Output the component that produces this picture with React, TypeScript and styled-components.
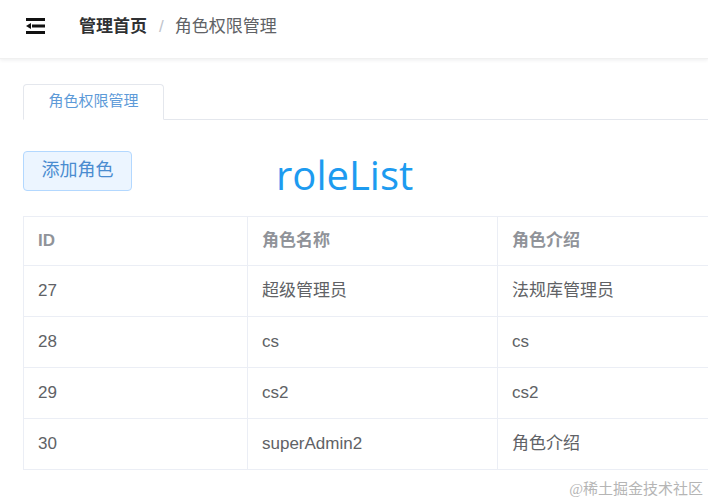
import styled, { createGlobalStyle } from 'styled-components';

const GlobalStyle = createGlobalStyle`
  html, body {
    margin: 0;
    padding: 0;
    background: #fff;
    font-family: "Liberation Sans", "Noto Sans CJK SC", sans-serif;
    overflow: hidden;
  }
`;

const Page = styled.div`
  width: 708px;
  height: 504px;
  position: relative;
  overflow: hidden;
`;

const Header = styled.header`
  height: 59px;
  display: flex;
  align-items: center;
  padding-left: 26px;
  padding-bottom: 5px;
  box-sizing: border-box;
  box-shadow: 0 1px 4px rgba(0, 21, 41, 0.08);
  border-bottom: 1px solid #f0f0f0;
`;

const FoldButton = styled.div`
  width: 19px;
  height: 16px;
  margin-right: 34px;
  margin-bottom: 2px;
  display: flex;
`;

const Breadcrumb = styled.nav`
  display: flex;
  align-items: center;
  font-size: 17px;
  line-height: 20px;
`;

const CrumbStrong = styled.span`
  font-weight: 700;
  color: #303133;
`;

const Separator = styled.span`
  color: #c0c4cc;
  margin: 0 11px 0 12px;
  font-weight: 400;
`;

const CrumbText = styled.span`
  color: #606266;
`;

const Main = styled.main`
  padding: 25px 0 0 23px;
`;

const TabBar = styled.div`
  display: flex;
  border-bottom: 1px solid #e4e7ed;
  height: 35px;
`;

const Tab = styled.div`
  width: 141px;
  height: 36px;
  box-sizing: border-box;
  border: 1px solid #e4e7ed;
  border-bottom-color: #fff;
  border-radius: 4px 4px 0 0;
  display: flex;
  align-items: center;
  justify-content: center;
  padding-bottom: 3px;
  font-size: 15px;
  line-height: 18px;
  color: #5d9ad8;
`;

const Toolbar = styled.div`
  display: flex;
  align-items: center;
  margin-top: 31px;
  height: 40px;
`;

const AddButton = styled.button`
  width: 109px;
  height: 40px;
  box-sizing: border-box;
  background: #ecf5ff;
  border: 1px solid #b3d8ff;
  border-radius: 4px;
  color: #4a8cd0;
  font-size: 18px;
  line-height: 20px;
  font-family: inherit;
  padding: 0 0 3px;
  cursor: pointer;
`;

const Title = styled.h1`
  margin: 7px 0 0 144px;
  font-family: "Open Sans", sans-serif;
  font-weight: 400;
  font-size: 40px;
  line-height: 40px;
  color: #1d9bf0;
`;

const Table = styled.div`
  margin-top: 25px;
  border-top: 1px solid #ebeef5;
  border-left: 1px solid #ebeef5;
  width: 720px;
`;

const Row = styled.div<{ $head?: boolean }>`
  display: grid;
  grid-template-columns: 224px 250px 1fr;
  height: ${(p) => (p.$head ? '49px' : '51px')};
  border-bottom: 1px solid #ebeef5;
  box-sizing: border-box;
`;

const Cell = styled.div<{ $head?: boolean }>`
  display: flex;
  align-items: center;
  padding-left: 14px;
  border-right: 1px solid #ebeef5;
  font-size: 17px;
  line-height: 20px;
  color: ${(p) => (p.$head ? '#909399' : '#606266')};
  font-weight: ${(p) => (p.$head ? 700 : 400)};
`;

const Watermark = styled.div`
  position: absolute;
  right: 5px;
  bottom: 6px;
  font-size: 15px;
  line-height: 18px;
  color: #b5b5b5;
  font-family: "Liberation Serif", "Noto Sans CJK SC", serif;
`;

const roles = [
  { id: 27, name: '超级管理员', desc: '法规库管理员' },
  { id: 28, name: 'cs', desc: 'cs' },
  { id: 29, name: 'cs2', desc: 'cs2' },
  { id: 30, name: 'superAdmin2', desc: '角色介绍' },
];

const FoldIcon = () => (
  <svg width="19" height="16" viewBox="0 0 19 16">
    <rect x="0" y="0" width="19" height="3" fill="#111" />
    <rect x="6" y="6.5" width="13" height="3" fill="#111" />
    <polygon points="0,8 5,5 5,11" fill="#111" />
    <rect x="0" y="13" width="19" height="3" fill="#111" />
  </svg>
);

const App = () => {
  return (
    <Page>
      <GlobalStyle />
      <Header>
        <FoldButton>
          <FoldIcon />
        </FoldButton>
        <Breadcrumb>
          <CrumbStrong>管理首页</CrumbStrong>
          <Separator>/</Separator>
          <CrumbText>角色权限管理</CrumbText>
        </Breadcrumb>
      </Header>
      <Main>
        <TabBar>
          <Tab>角色权限管理</Tab>
        </TabBar>
        <Toolbar>
          <AddButton>添加角色</AddButton>
          <Title>roleList</Title>
        </Toolbar>
        <Table>
          <Row $head>
            <Cell $head>ID</Cell>
            <Cell $head>角色名称</Cell>
            <Cell $head>角色介绍</Cell>
          </Row>
          {roles.map((r) => (
            <Row key={r.id}>
              <Cell>{r.id}</Cell>
              <Cell>{r.name}</Cell>
              <Cell>{r.desc}</Cell>
            </Row>
          ))}
        </Table>
      </Main>
      <Watermark>@稀土掘金技术社区</Watermark>
    </Page>
  );
};

export default App;
